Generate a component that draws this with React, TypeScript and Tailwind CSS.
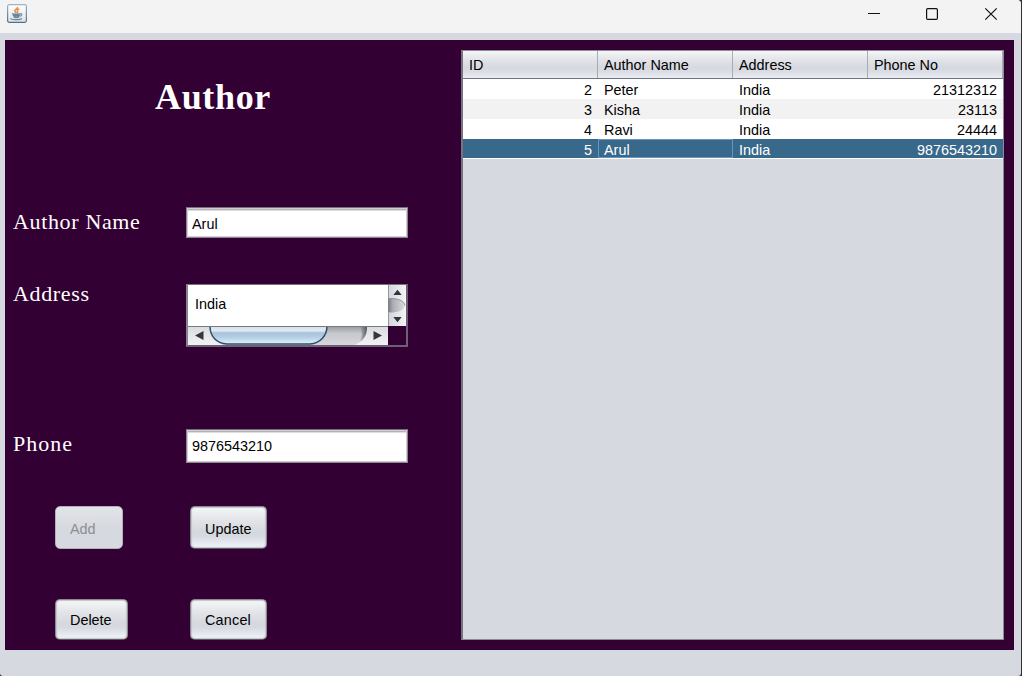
import React from "react";

type Author = { id: number; name: string; address: string; phone: string };

const authors: Author[] = [
  { id: 2, name: "Peter", address: "India", phone: "21312312" },
  { id: 3, name: "Kisha", address: "India", phone: "23113" },
  { id: 4, name: "Ravi", address: "India", phone: "24444" },
  { id: 5, name: "Arul", address: "India", phone: "9876543210" },
];

const selectedId = 5;

function JavaIcon() {
  return (
    <svg className="mt-1 ml-[7px]" width="20" height="19" viewBox="0 0 20 19" fill="none">
      <defs>
        <linearGradient id="cupBox" x1="0" y1="0" x2="0" y2="1">
          <stop offset="0" stopColor="#ffffff" />
          <stop offset="1" stopColor="#dfe1e4" />
        </linearGradient>
        <linearGradient id="cupEdge" x1="0" y1="0" x2="0" y2="1">
          <stop offset="0" stopColor="#9fb3c3" />
          <stop offset="1" stopColor="#50708a" />
        </linearGradient>
      </defs>
      <rect x="0.6" y="0.6" width="18.8" height="17.8" rx="1.8" fill="url(#cupBox)" stroke="url(#cupEdge)" strokeWidth="1.2" />
      <path d="M10.500 3c.8 1.700-3 2.300-2.700 4 .1.900 1.100 1.300 1.500 2.100M12.300 5c-1.600.5-2.500 1.300-1.800 2.300.5.700.3 1.200-.3 1.700" stroke="#ee8b3c" strokeWidth="1.500" />
      <path d="M5 9.700c1.600.8 6.500.8 8.400 0M5.800 11.300c1.500.7 5.500.7 7 0M6.600 12.800c1.300.6 4.300.6 5.600 0" stroke="#66879f" strokeWidth="1.500" />
      <path d="M13.300 9.600c2-.3 2 2.100-.6 2.700" stroke="#7793a8" strokeWidth="1.200" />
      <path d="M3.700 14.300c-.6 1.700 9.600 1.800 11.300.2" stroke="#66879f" strokeWidth="1.200" />
    </svg>
  );
}

function TitleBar() {
  return (
    <div className="flex h-[33px] justify-between bg-[#f3f3f3]">
      <JavaIcon />
      <svg className="mr-[23px] mt-[7px]" width="130" height="14" viewBox="0 0 130 14" fill="none" stroke="#111">
        <path d="M0 6.500h12" />
        <rect x="58.600" y="1.600" width="10.800" height="10.800" rx="1.200" strokeWidth="1.200" />
        <path d="M117.300 1.300l11.400 11.400M128.700 1.300l-11.400 11.400" strokeWidth="1.200" />
      </svg>
    </div>
  );
}

function Label({ children, className }: { children: React.ReactNode; className: string }) {
  return (
    <label
      className={`w-[181px] shrink-0 whitespace-nowrap pl-2 font-['Liberation_Serif',serif] text-[22px] leading-[28px] text-white ${className}`}
    >
      {children}
    </label>
  );
}

function TextField({ value, className }: { value: string; className: string }) {
  return (
    <div
      className={`flex w-[222px] items-center border border-[#8d8792] border-t-[#746e79] bg-white pl-[5px] shadow-[inset_0_0_0_1px_#d0ced3,inset_0_2px_0_#b4b3b7,inset_0_3px_1px_#dcdcde] ${className}`}
    >
      {value}
    </div>
  );
}

function AddressBox() {
  return (
    <div className="h-[63px] w-[222px] border-2 border-t border-[#6b6074] border-l-[#8a8490] border-t-[#777080]">
      <div className="flex h-[41px]">
        <div className="flex w-[200px] items-center bg-white pl-[7px] pb-1">India</div>
        <svg width="18" height="41" viewBox="0 -1 18 41">
          <defs>
            <linearGradient id="vTrack" x1="0" x2="1" y1="0" y2="0">
              <stop offset="0" stopColor="#77797e" />
              <stop offset=".3" stopColor="#adafb5" />
              <stop offset="1" stopColor="#dadbe0" />
            </linearGradient>
            <linearGradient id="arrowBox" x1="0" x2="1" y1="0" y2="0">
              <stop offset="0" stopColor="#d3d5da" />
              <stop offset="1" stopColor="#f3f4f6" />
            </linearGradient>
          </defs>
          <rect y="-1" width="18" height="41" fill="url(#arrowBox)" />
          <path d="M0 12.500h5q11 1 12 7-1 6-12 7H0z" fill="url(#vTrack)" />
          <path d="M0 12.500h5q11 1 12 7" fill="none" stroke="#85868c" strokeWidth=".8" />
          <path d="M.5-1v14M.5 27v13" stroke="#94969b" />
          <path d="M5.300 9L9.500 3.800l4.200 5.200zM5.300 31h8.400l-4.200 5.200z" fill="#34363a" />
        </svg>
      </div>
      <svg width="200" height="19" viewBox="0 0 200 19">
        <defs>
          <linearGradient id="hTrack" x1="0" x2="0" y1="0" y2="1">
            <stop offset="0" stopColor="#96989f" />
            <stop offset=".4" stopColor="#c7c9cf" />
            <stop offset="1" stopColor="#d5d7dd" />
          </linearGradient>
          <linearGradient id="thumb" x1="0" x2="0" y1="0" y2="1">
            <stop offset="0" stopColor="#d3e0ed" />
            <stop offset=".27" stopColor="#e1eaf3" />
            <stop offset=".38" stopColor="#abc3da" />
            <stop offset=".6" stopColor="#b2cce2" />
            <stop offset="1" stopColor="#dcf2ff" />
          </linearGradient>
          <linearGradient id="arrowBoxH" x1="0" x2="0" y1="0" y2="1">
            <stop offset="0" stopColor="#d9dbdf" />
            <stop offset="1" stopColor="#f1f2f4" />
          </linearGradient>
          <linearGradient id="trackEnd" x1="0" x2="1" y1="0" y2="0">
            <stop offset="0" stopColor="#67696f" stopOpacity="0" />
            <stop offset="1" stopColor="#55575c" />
          </linearGradient>
        </defs>
        <rect width="200" height="19" fill="url(#arrowBoxH)" />
        <path d="M22 0H179v3q-1 11-9 14l-3 2H36Q22 15 22 0z" fill="url(#hTrack)" />
        <path d="M172 0h7v3q-1 10-8 13 5-8 1-16z" fill="url(#trackEnd)" />
        <path d="M22 0c0 10 6 17 17 18h83c10-1 17-8 17-18z" fill="url(#thumb)" />
        <path d="M22 0c0 10 6 17.500 17 18h83c10-.5 17-8 17-18" fill="none" stroke="#304f68" strokeWidth="1.500" />
        <path d="M0 .5h200" stroke="#77797e" />
        <path d="M15.500 5v9L7 9.500zM185.500 5v9l8.500-4.500z" fill="#34363a" />
      </svg>
    </div>
  );
}

function Button({ label, className, disabled = false }: { label: string; className: string; disabled?: boolean }) {
  const tone = disabled
    ? "border-[#b1b2b8] text-[#8e8f91] bg-linear-to-b from-[#e2e4e8] via-[#d6d9df] to-[#d6d9df]"
    : "border-[#8b8a92] border-b-[#5c5963] text-black shadow-[inset_0_0_1px_1px_#c3c5cb] bg-[linear-gradient(#f6f7f8_0%,#e3e5e9_30%,#d5d8de_60%,#d6d9df_70%,#f0f4fc_100%)]";
  return (
    <button disabled={disabled} className={`flex items-center rounded-[5px] border pl-[14px] ${tone} ${className}`}>
      {label}
    </button>
  );
}

function AuthorForm() {
  return (
    <div className="w-[456px] shrink-0">
      <h1 className="h-[167px] pl-[150px] pt-9 font-['Liberation_Serif',serif] text-[36px] font-bold leading-[42px] tracking-[0.65px] text-white">
        Author
      </h1>
      <div className="flex h-[77px]">
        <Label className="pt-px tracking-[0.65px]">Author Name</Label>
        <TextField value="Arul" className="h-[31px] pt-[3px]" />
      </div>
      <div className="flex h-[145px]">
        <Label className="-mt-1 tracking-[0.65px]">Address</Label>
        <AddressBox />
      </div>
      <div className="flex h-[77px]">
        <Label className="pt-px tracking-[1px]">Phone</Label>
        <TextField value="9876543210" className="h-[34px]" />
      </div>
      <div className="flex h-[93px] pl-[50px]">
        <Button label="Add" className="h-[43px] w-[68px] pt-0.5" disabled />
        <Button label="Update" className="ml-[67px] h-[43px] w-[77px] pt-0.5" />
      </div>
      <div className="flex pl-[50px]">
        <Button label="Delete" className="h-[41px] w-[73px]" />
        <Button label="Cancel" className="ml-[62px] h-[41px] w-[77px] tracking-[0.2px]" />
      </div>
    </div>
  );
}

function AuthorTable() {
  return (
    <div className="mt-2.5 h-[590px] w-[543px] border border-[#8d8c96] border-l-2 border-l-[#77747f] bg-[#d6d9df]">
      <div className="grid h-[28px] grid-cols-[135px_135px_135px_135px] border-b border-[#71747e] bg-[linear-gradient(#f5f6f8_0%,#e3e5e9_30%,#d6d9df_60%,#d9dce2_75%,#e9edf4_100%)]">
        {["ID", "Author Name", "Address", "Phone No"].map((title) => (
          <div key={title} className="flex items-center border-r border-[#a8abb2] pl-1.5 pt-px">
            {title}
          </div>
        ))}
      </div>
      {authors.map((a, i) => {
        const selected = a.id === selectedId;
        const tone = selected
          ? "h-[19px] bg-[#39698a] text-white"
          : i % 2
            ? "h-5 bg-[#f2f2f2]"
            : "h-5 bg-white";
        return (
          <div key={a.id} className={`grid grid-cols-[135px_135px_135px_135px] leading-[22px] ${tone}`}>
            <div className="pr-1.5 text-right">{a.id}</div>
            <div className={selected ? "h-[19px] border border-[#6a94c4] pl-[5px] leading-5" : "pl-1.5"}>{a.name}</div>
            <div className="pl-1.5">{a.address}</div>
            <div className="pr-1.5 text-right">{a.phone}</div>
          </div>
        );
      })}
      <div className="h-px bg-white" />
    </div>
  );
}

export default function App() {
  return (
    <div className="h-[676px] w-[1022px] overflow-hidden bg-[#303034] pr-px font-['Liberation_Sans',Arial,sans-serif] text-[14.4px] leading-5 text-black">
      <div className="h-full overflow-hidden rounded-b-[3px] rounded-tr-[4px] bg-[#d6d9df]">
        <TitleBar />
        <main className="ml-[5px] mt-[7px] flex h-[610px] w-[1009px] bg-[#330033]">
          <AuthorForm />
          <AuthorTable />
        </main>
      </div>
    </div>
  );
}
